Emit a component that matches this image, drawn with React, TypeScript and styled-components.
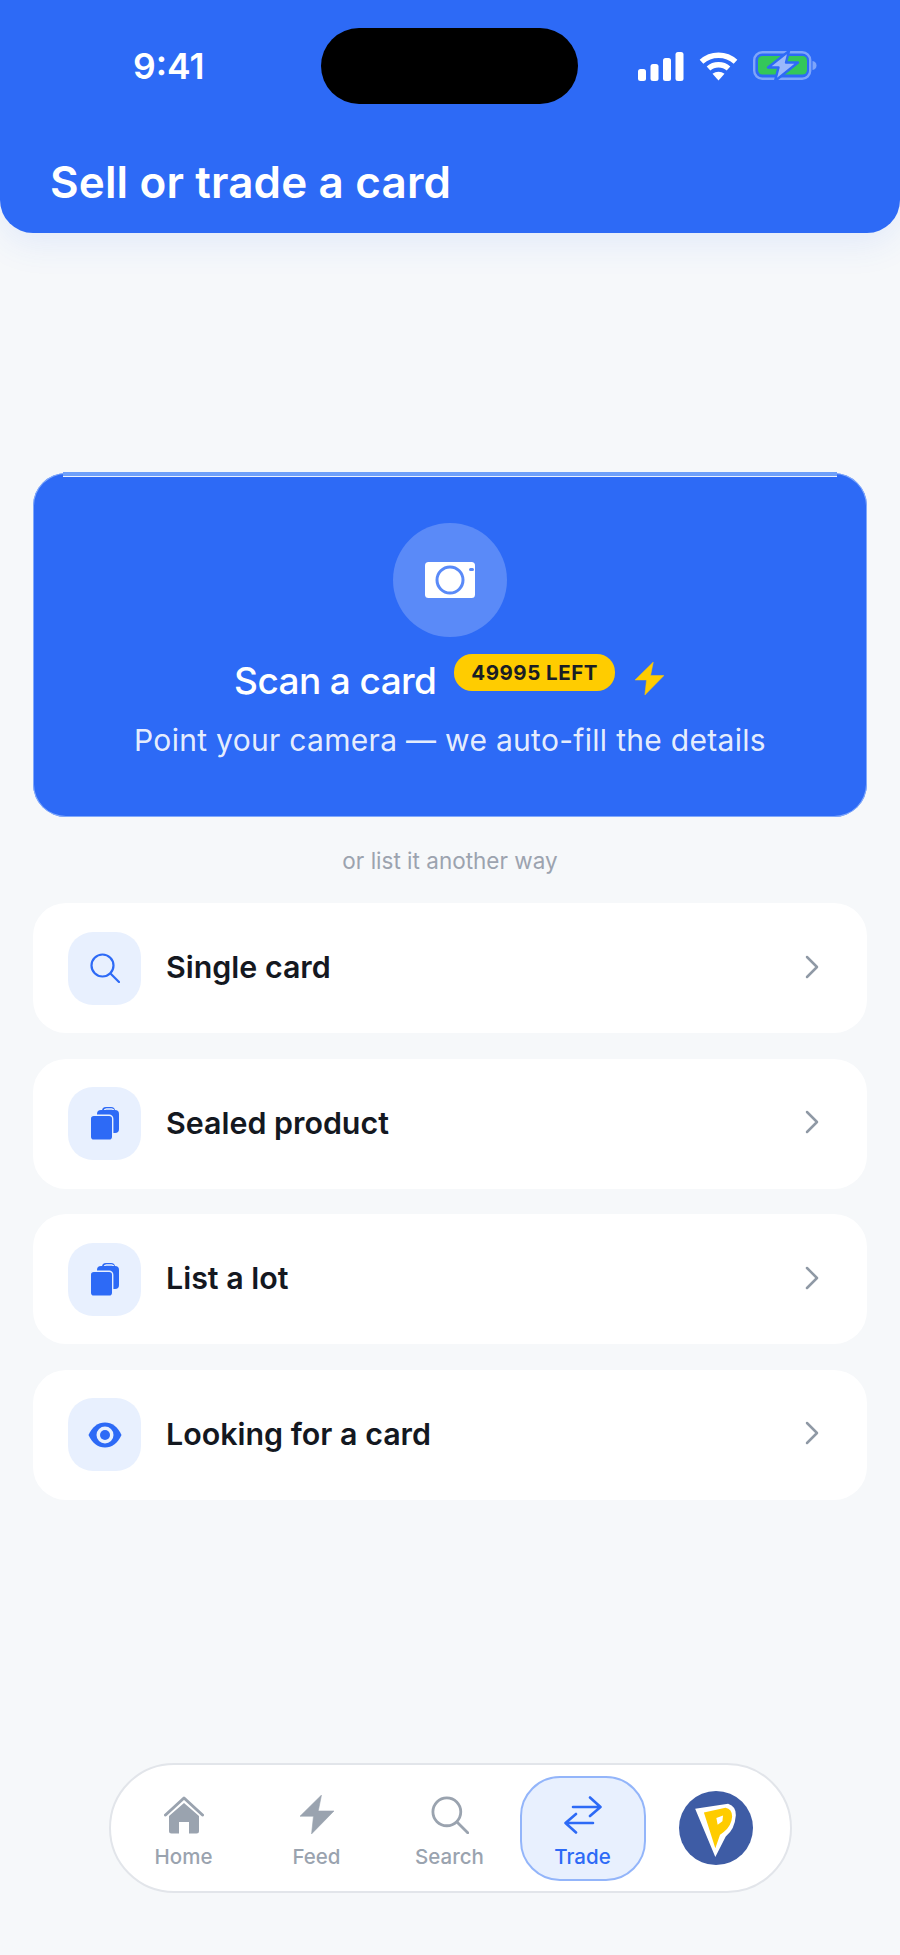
import React from "react";
import styled, { createGlobalStyle } from "styled-components";
import { ChevronRight } from "lucide-react";

const GlobalStyle = createGlobalStyle`
  html, body {
    margin: 0;
    padding: 0;
    background: #f6f8fa;
    font-family: Inter, "Liberation Sans", sans-serif;
  }
  * { box-sizing: border-box; }
`;

const Page = styled.div`
  width: 900px;
  height: 1955px;
  display: flex;
  flex-direction: column;
  background: #f6f8fa;
  overflow: hidden;
`;

const Header = styled.header`
  height: 233px;
  flex: none;
  padding-top: 28px;
  background: #2d6af6;
  border-radius: 0 0 33px 33px;
  box-shadow: 0 10px 36px rgba(45, 106, 246, 0.1);
`;

const StatusBar = styled.div`
  display: flex;
  align-items: center;
  height: 76px;
  padding-left: 133px;
`;

const Time = styled.div`
  width: 188px;
  color: #fff;
  font-size: 35.5px;
  font-weight: 600;
`;

const Island = styled.div`
  width: 257px;
  height: 76px;
  margin-right: 60px;
  border-radius: 38px;
  background: #000;
`;

const StatusIcons = styled.div`
  display: flex;
  align-items: center;
  gap: 15px;
`;

const Title = styled.h1`
  margin: 50px 0 0 50px;
  color: #fff;
  font-size: 44px;
  line-height: 56px;
  font-weight: 600;
  letter-spacing: 0.15px;
`;

const Main = styled.main`
  display: flex;
  flex-direction: column;
  padding: 240px 33px 0;
`;

const ScanCard = styled.section`
  position: relative;
  height: 344px;
  display: flex;
  flex-direction: column;
  align-items: center;
  padding-top: 50px;
  background: #2d6af6;
  border-radius: 33px;
  box-shadow: inset 0 0 0 1px rgba(150, 185, 252, 0.8);

  /* light edge along the top of the card */
  &::before {
    content: "";
    position: absolute;
    top: -1px;
    left: 30px;
    right: 30px;
    height: 4px;
    background: #6ea0fa;
    border-bottom: 1px solid rgba(255, 255, 255, 0.85);
  }
`;

const CameraCircle = styled.div`
  width: 114px;
  height: 114px;
  display: flex;
  align-items: center;
  justify-content: center;
  border-radius: 50%;
  background: #5a8af8;
`;

const ScanRow = styled.div`
  display: flex;
  align-items: flex-start;
  margin-top: 17px;
  padding-right: 2px;
`;

const ScanTitle = styled.div`
  margin-top: 4px;
  color: #fff;
  font-size: 37px;
  line-height: 46px;
  font-weight: 500;
  letter-spacing: -0.6px;
`;

const Badge = styled.span`
  height: 37px;
  margin: 0 20px 0 18px;
  padding: 0 17px;
  display: flex;
  align-items: center;
  border-radius: 18px;
  background: #ffcc00;
  color: #1a1d24;
  font-size: 20.5px;
  font-weight: 700;
  letter-spacing: 0.5px;
`;

const BoltWrap = styled.span`
  display: flex;
  margin-top: 8px;
`;

const ScanSub = styled.div`
  margin-top: 16px;
  color: rgba(255, 255, 255, 0.9);
  font-size: 30px;
  line-height: 40px;
  letter-spacing: 0.3px;
`;

const Divider = styled.div`
  margin: 31px 0 29px;
  text-align: center;
  color: #9ca3af;
  font-size: 22.5px;
  line-height: 26px;
`;

const List = styled.div`
  display: flex;
  flex-direction: column;
  gap: 25.5px;
`;

const Row = styled.div`
  height: 130px;
  display: flex;
  align-items: center;
  padding: 0 35.5px 0 35px;
  border-radius: 33px;
  background: #fff;
`;

const Tile = styled.div`
  width: 73px;
  height: 73px;
  flex: none;
  display: flex;
  align-items: center;
  justify-content: center;
  border-radius: 25px;
  background: #e8f0fe;
`;

const RowLabel = styled.div`
  flex: 1;
  margin: 0 0 2px 25px;
  color: #14181f;
  font-size: 30.4px;
  font-weight: 600;
`;

const Chevron = styled(ChevronRight)`
  flex: none;
  margin-bottom: 3px;
  color: #8f99a5;
`;

const NavWrap = styled.div`
  margin-top: auto;
  padding: 0 108px 62px 109px;
`;

const Nav = styled.nav`
  height: 130px;
  display: flex;
  align-items: center;
  padding: 0 6px;
  background: #fff;
  border: 2px solid #e2e5ea;
  border-radius: 65px;
`;

const NavItem = styled.div<{ $active?: boolean }>`
  width: 133px;
  height: 105px;
  display: flex;
  flex-direction: column;
  align-items: center;
  justify-content: flex-start;
  padding-top: 18px;
  flex: none;
  border-radius: 40px;
  color: ${(p) => (p.$active ? "#2d6af6" : "#9aa3af")};
  ${(p) =>
    p.$active &&
    `
    width: 126px;
    margin: 0 3.5px;
    background: #e8f0fe;
    border: 2px solid #93b5fa;
    padding-top: 16px;
  `}
`;

const NavIcon = styled.div`
  height: 42px;
  display: flex;
  align-items: center;
`;

const NavLabel = styled.div`
  margin-top: 8px;
  font-size: 20.5px;
  line-height: 26px;
  font-weight: 500;
`;

const AvatarSlot = styled.div`
  width: 133px;
  flex: none;
  display: flex;
  justify-content: center;
`;

const Signal = () => (
  <svg width="46" height="29" viewBox="0 0 46 29">
    <g fill="#fff">
      <rect x="0" y="17" width="8" height="12" rx="2.5" />
      <rect x="12.5" y="12" width="8" height="17" rx="2.5" />
      <rect x="25" y="6" width="8" height="23" rx="2.5" />
      <rect x="37.5" y="0" width="8" height="29" rx="2.5" />
    </g>
  </svg>
);

const Wifi = () => (
  <svg width="39" height="29" viewBox="0 0 39 29">
    <g fill="none" stroke="#fff" strokeWidth="5.4" strokeLinecap="butt">
      <path d="M2.5 9.8C12 1 27 1 36.5 9.8" />
      <path d="M9.5 16.5C15 11.5 24 11.5 29.5 16.5" />
    </g>
    <path d="M13.5 21.8C17 19 22 19 25.5 21.8L19.5 28.5Z" fill="#fff" />
  </svg>
);

const Battery = () => (
  <svg width="65" height="30" viewBox="0 0 65 30">
    <rect x="1.2" y="1.2" width="56" height="26.600" rx="8" fill="none" stroke="#7ea5fa" strokeWidth="2.4" />
    <rect x="5" y="5" width="49" height="18.500" rx="4.500" fill="#34c759" />
    <path d="M59.500 10c2.500.5 4 2 4 4.500s-1.500 4-4 4.500z" fill="#7ea5fa" />
    <path d="M36 0L15 16.500h10.500L22 30 45 11.500H33z" fill="#9ab9fb" stroke="#2d6af6" strokeWidth="2.400" strokeLinejoin="round" />
  </svg>
);

const Camera = () => (
  <svg width="50" height="36" viewBox="0 0 50 36">
    <rect width="50" height="36" rx="3.500" fill="#fff" />
    <circle cx="25" cy="18" r="13" fill="#fff" stroke="#5a8af8" strokeWidth="3" />
    <rect x="44" y="6" width="5" height="3" rx="1.500" fill="#5a8af8" />
  </svg>
);

const Bolt = ({ color, w, h }: { color: string; w: number; h: number }) => (
  <svg width={w} height={h} viewBox="0 0 28.500 32.500">
    <path d="M18 0L0 17.700h11.300L9.700 32.500 28.500 13.300H15.300z" fill={color} stroke={color} strokeWidth="0.500" strokeLinejoin="round" />
  </svg>
);

const Magnifier = ({ color, size, sw }: { color: string; size: number; sw: number }) => (
  <svg width={size} height={size} viewBox="0 0 30 30" fill="none" stroke={color} strokeWidth={sw} strokeLinecap="round">
    <circle cx="12.500" cy="12.500" r="11" />
    <path d="M20.500 20.500L29 29" />
  </svg>
);

const Stack = () => (
  <svg width="28" height="33" viewBox="0 0 28 33">
    <rect x="11" y="0" width="13" height="12" rx="4" fill="#2d6af6" />
    <path d="M13 4a2.500 2.500 0 0 1 2.500-2h5a2.500 2.500 0 0 1 2.500 2" fill="none" stroke="#e8f0fe" strokeWidth="1.300" />
    <rect x="6" y="3" width="22" height="23" rx="4" fill="#2d6af6" />
    <rect x="-0.700" y="8.300" width="22.400" height="25" rx="3.500" fill="#2d6af6" stroke="#e8f0fe" strokeWidth="1.400" />
  </svg>
);

const Eye = () => (
  <svg width="34" height="26" viewBox="0 0 34 26">
    <path d="M0.500 13C4 5 10 0.500 17 0.500S30 5 33.500 13C30 21 24 25.500 17 25.500S4 21 0.500 13Z" fill="#2d6af6" />
    <circle cx="17" cy="13" r="8.500" fill="#e8f0fe" />
    <circle cx="17" cy="13" r="5" fill="#2d6af6" />
  </svg>
);

const Home = () => (
  <svg width="40" height="38" viewBox="0 0 40 38">
    <path d="M1.500 19L20 2l18.500 17" fill="none" stroke="#9aa3af" strokeWidth="3" strokeLinecap="round" strokeLinejoin="round" />
    <path d="M5 20L20 7l15 13v15a2.500 2.500 0 0 1-2.500 2.500H25V26h-10v11.500H7.500A2.500 2.500 0 0 1 5 35z" fill="#9aa3af" />
  </svg>
);

const TradeArrows = () => (
  <svg width="38" height="38" viewBox="0 0 38 38" fill="none" stroke="#2d6af6" strokeWidth="2.600" strokeLinecap="round" strokeLinejoin="round">
    <path d="M9 11h27M26 1.500L36.500 11 26 20" />
    <path d="M29 27H2M12 18L1.500 27 12 36.500" />
  </svg>
);

const Avatar = () => (
  <svg width="74" height="74" viewBox="0 0 220 220">
    <circle cx="110" cy="110" r="110" fill="#3e5ca5" />
    <path d="M48 53L146 38Q170 46 169 72Q166 114 139 135L108 196Z" fill="#fff" />
    <path d="M74 64L138 50Q158 54 158 76Q156 104 133 122L122 130L108 170Z" fill="#ffcc00" />
    <path d="M111 80L131 73L129 90L115 100Z" fill="#fff" />
  </svg>
);

const rows = [
  { label: "Single card", icon: <Magnifier color="#2d6af6" size={30} sw={2.2} /> },
  { label: "Sealed product", icon: <Stack /> },
  { label: "List a lot", icon: <Stack /> },
  { label: "Looking for a card", icon: <Eye /> },
];

const App = () => (
  <Page>
    <GlobalStyle />
    <Header>
      <StatusBar>
        <Time>9:41</Time>
        <Island />
        <StatusIcons>
          <Signal />
          <Wifi />
          <Battery />
        </StatusIcons>
      </StatusBar>
      <Title>Sell or trade a card</Title>
    </Header>
    <Main>
      <ScanCard>
        <CameraCircle>
          <Camera />
        </CameraCircle>
        <ScanRow>
          <ScanTitle>Scan a card</ScanTitle>
          <Badge>49995 LEFT</Badge>
          <BoltWrap>
            <Bolt color="#ffcc00" w={29} h={33} />
          </BoltWrap>
        </ScanRow>
        <ScanSub>Point your camera — we auto-fill the details</ScanSub>
      </ScanCard>
      <Divider>or list it another way</Divider>
      <List>
        {rows.map((r) => (
          <Row key={r.label}>
            <Tile>{r.icon}</Tile>
            <RowLabel>{r.label}</RowLabel>
            <Chevron size={40} strokeWidth={1.5} />
          </Row>
        ))}
      </List>
    </Main>
    <NavWrap>
      <Nav>
        <NavItem>
          <NavIcon><Home /></NavIcon>
          <NavLabel>Home</NavLabel>
        </NavItem>
        <NavItem>
          <NavIcon><Bolt color="#9aa3af" w={34} h={39} /></NavIcon>
          <NavLabel>Feed</NavLabel>
        </NavItem>
        <NavItem>
          <NavIcon><Magnifier color="#9aa3af" size={38} sw={2.2} /></NavIcon>
          <NavLabel>Search</NavLabel>
        </NavItem>
        <NavItem $active>
          <NavIcon><TradeArrows /></NavIcon>
          <NavLabel>Trade</NavLabel>
        </NavItem>
        <AvatarSlot>
          <Avatar />
        </AvatarSlot>
      </Nav>
    </NavWrap>
  </Page>
);

export default App;
